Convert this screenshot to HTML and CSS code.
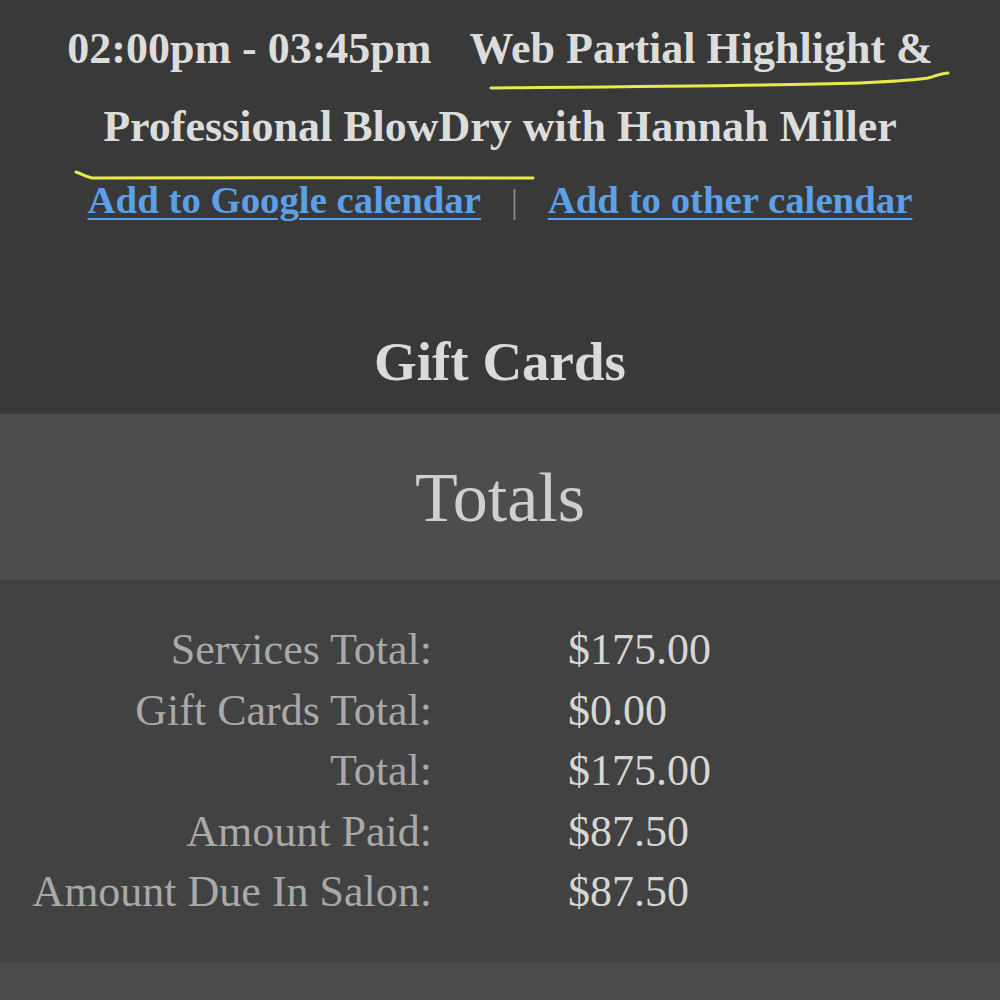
FILE: index.html
```html
<!DOCTYPE html>
<html>
<head>
<meta charset="utf-8">
<link rel="stylesheet" href="styles.css">
</head>
<body>
<section class="appointment">
  <div class="appt-title">
    <div class="appt-line"><span class="appt-time">02:00pm - 03:45pm</span><span class="appt-name">Web Partial Highlight &amp;</span></div>
    <div class="appt-line">Professional BlowDry with Hannah Miller</div>
  </div>
  <p class="cal-links"><a href="#" class="cal-link">Add to Google calendar</a><span class="sep">|</span><a href="#" class="cal-link">Add to other calendar</a></p>
  <h2 class="gift-title">Gift Cards</h2>
  <svg class="scribble" width="1000" height="200" viewBox="0 0 1000 200">
    <path d="M491 88 C 600 87, 760 86, 860 83 C 900 81, 918 80, 928 78 C 936 76, 942 73, 948 73" fill="none" stroke="#e9e84c" stroke-width="3" stroke-linecap="round"/>
    <path d="M76 172 C 82 174, 86 177, 92 178 C 200 177, 400 178, 533 178" fill="none" stroke="#e9e84c" stroke-width="3" stroke-linecap="round"/>
  </svg>
</section>
<header class="totals-head">Totals</header>
<section class="totals">
  <div class="row"><span class="label">Services Total:</span><span class="value">$175.00</span></div>
  <div class="row"><span class="label">Gift Cards Total:</span><span class="value">$0.00</span></div>
  <div class="row"><span class="label">Total:</span><span class="value">$175.00</span></div>
  <div class="row"><span class="label">Amount Paid:</span><span class="value">$87.50</span></div>
  <div class="row"><span class="label">Amount Due In Salon:</span><span class="value">$87.50</span></div>
</section>
<footer class="bottom"></footer>
</body>
</html>
```
FILE: styles.css
```css
html, body {
  margin: 0;
  padding: 0;
  background: #4b4b4b;
  font-family: "Liberation Serif", "Times New Roman", serif;
}
.appointment {
  position: relative;
  background: #393939;
  padding: 10px 20px 22px;
  text-align: center;
}
.appt-title {
  font-size: 44px;
  line-height: 78px;
  font-weight: bold;
  color: #dcdcdc;
}
.appt-time {
  margin-right: 38px;
}
.cal-links {
  margin: 4px 0 0;
  font-size: 38.8px;
  line-height: 60px;
  font-weight: bold;
}
.cal-link {
  color: #5ba0e8;
  text-decoration: underline;
  text-decoration-thickness: 2px;
  text-underline-offset: 5px;
}
.sep {
  color: #8a8a8a;
  font-weight: normal;
  font-size: 34px;
  padding: 0 30px;
}
.gift-title {
  margin: 100px 0 0;
  font-size: 55px;
  line-height: 60px;
  font-weight: bold;
  color: #dadada;
}
.scribble {
  position: absolute;
  left: 0;
  top: 0;
  pointer-events: none;
}
.totals-head {
  background: #4d4d4d;
  height: 164px;
  padding-top: 2px;
  line-height: 164px;
  text-align: center;
  font-size: 70px;
  color: #cfcfcf;
}
.totals {
  background: #424242;
  padding: 40px 0 39px;
}
.row {
  display: grid;
  grid-template-columns: 432px 1fr;
  column-gap: 136px;
  font-size: 44px;
  line-height: 60.5px;
}
.label {
  text-align: right;
  color: #a9a9a9;
}
.value {
  color: #d6d6d6;
}
.bottom {
  height: 60px;
  background: #4b4b4b;
}
```
